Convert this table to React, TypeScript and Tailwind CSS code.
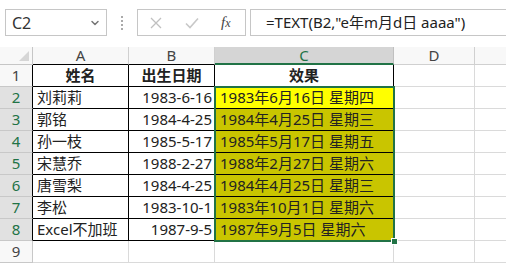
import { ChevronDown } from 'lucide-react';

const rows = [
  ['姓名', '出生日期', '效果'],
  ['刘莉莉', '1983-6-16', '1983年6月16日 星期四'],
  ['郭铭', '1984-4-25', '1984年4月25日 星期三'],
  ['孙一枝', '1985-5-17', '1985年5月17日 星期五'],
  ['宋慧乔', '1988-2-27', '1988年2月27日 星期六'],
  ['唐雪梨', '1984-4-25', '1984年4月25日 星期三'],
  ['李松', '1983-10-1', '1983年10月1日 星期六'],
  ['Excel不加班', '1987-9-5', '1987年9月5日 星期六'],
  ['', '', ''],
];

const font = { fontFamily: '"Noto Sans", "Noto Sans CJK SC", sans-serif' };

export default function App() {
  return (
    <div className="w-[506px] h-[264px] overflow-hidden bg-white text-[15px] text-[#222]" style={font}>
      {/* Formula bar */}
      <div className="h-[47px] flex items-start pt-[9px] pl-[5px]">
        <div className="w-[102px] h-[27px] border border-[#c6c6c6] flex items-center justify-between pl-[6px] pr-[5px]">
          <span className="text-[16px] text-[#333]">C2</span>
          <ChevronDown className="w-3 h-3 text-[#777]" strokeWidth={3} />
        </div>
        <div className="w-[30px] h-[27px] flex flex-col items-center justify-center gap-[2px]">
          <span className="w-[2px] h-[2px] bg-[#aaa]" />
          <span className="w-[2px] h-[2px] bg-[#aaa]" />
          <span className="w-[2px] h-[2px] bg-[#aaa]" />
          <span className="w-[2px] h-[2px] bg-[#aaa]" />
        </div>
        <div className="w-[109px] h-[27px] border border-[#c6c6c6] flex items-center pl-[12px]">
          <svg width="12" height="12" viewBox="0 0 12 12" className="mr-[23px]">
            <path d="M1 1 L11 11 M11 1 L1 11" stroke="#c0c0c0" strokeWidth="1.3" />
          </svg>
          <svg width="14" height="12" viewBox="0 0 14 12" className="mr-[22px]">
            <path d="M1 6.5 L5 10.5 L13 1.5" stroke="#c8c8c8" strokeWidth="1.6" fill="none" />
          </svg>
          <span className="italic text-[15px] text-[#444]" style={{ fontFamily: '"Liberation Serif", serif' }}>
            f<span className="text-[12px]">x</span>
          </span>
        </div>
        <div className="ml-[4px] flex-1 h-[27px] border border-r-0 border-[#c6c6c6] flex items-center pl-[15px] text-[15px] text-[#222]">
          =TEXT(B2,"e年m月d日 aaaa")
        </div>
      </div>

      {/* Sheet */}
      <div className="relative">
        <div className="grid grid-cols-[33px_96px_86px_179px_81px_1fr] grid-rows-[18px_repeat(9,22px)]">
          {/* Column headers */}
          <div className="bg-[#f8f8f8] border-r border-b border-[#c6c6c6] flex items-end justify-end pr-[3px] pb-[3px]">
            <svg width="10" height="10" viewBox="0 0 10 10">
              <path d="M10 0 L10 10 L0 10 Z" fill="#d6d6d6" />
            </svg>
          </div>
          <div className="bg-[#f8f8f8] border-r border-b border-r-[#d0d0d0] border-b-black flex items-center justify-center text-[#444]">A</div>
          <div className="bg-[#f8f8f8] border-r border-b border-r-[#d0d0d0] border-b-black flex items-center justify-center text-[#444]">B</div>
          <div className="bg-[#d5d5d5] border-r border-b-2 border-r-[#c0c0c0] border-b-[#217346] flex items-center justify-center text-[#217346]">C</div>
          <div className="bg-[#f8f8f8] border-r border-b border-[#d0d0d0] flex items-center justify-center text-[#444]">D</div>
          <div className="bg-[#f8f8f8] border-b border-[#d0d0d0]" />

          {rows.map((r, i) => {
            const n = i + 1;
            const inTable = n <= 8;
            const sel = n >= 2 && n <= 8;
            const head = n === 1;
            return [
              <div
                key={`h${n}`}
                className={
                  sel
                    ? 'bg-[#e1e1e1] border-r border-b border-r-black border-b-[#c8c8c8] flex items-center justify-center text-[#217346]'
                    : inTable
                    ? 'bg-[#f8f8f8] border-r border-b border-r-black border-b-[#c8c8c8] flex items-center justify-center text-[#444]'
                    : 'bg-[#f8f8f8] border-r border-b border-[#c8c8c8] flex items-center justify-center text-[#444]'
                }
              >
                {n}
              </div>,
              <div
                key={`a${n}`}
                className={
                  head
                    ? 'border-r border-b border-black flex items-center justify-center font-bold'
                    : inTable
                    ? 'border-r border-b border-black flex items-center pl-[4px] whitespace-nowrap'
                    : 'border-r border-b border-[#dadada]'
                }
              >
                {r[0]}
              </div>,
              <div
                key={`b${n}`}
                className={
                  head
                    ? 'border-r border-b border-black flex items-center justify-center font-bold'
                    : inTable
                    ? 'border-r border-b border-black flex items-center justify-end pr-[2px] whitespace-nowrap'
                    : 'border-r border-b border-[#dadada]'
                }
              >
                {r[1]}
              </div>,
              <div
                key={`c${n}`}
                className={
                  head
                    ? 'border-r border-b border-black flex items-center justify-center font-bold'
                    : n === 2
                    ? 'bg-[#ffff00] border-r border-b border-black flex items-center pl-[5px] whitespace-nowrap'
                    : sel
                    ? 'bg-[#c9c500] border-r border-b border-black flex items-center pl-[5px] whitespace-nowrap'
                    : 'border-r border-b border-[#dadada]'
                }
              >
                {r[2]}
              </div>,
              <div key={`d${n}`} className="border-r border-b border-[#dadada]" />,
              <div key={`e${n}`} className="border-b border-[#dadada]" />,
            ];
          })}
        </div>

        {/* selection outline C2:C8 */}
        <div className="absolute left-[214px] top-[39px] w-[181px] h-[156px] border-2 border-[#217346] pointer-events-none" />
        <div className="absolute left-[391px] top-[191px] w-[7px] h-[7px] bg-[#217346] border border-white" />
      </div>
    </div>
  );
}
